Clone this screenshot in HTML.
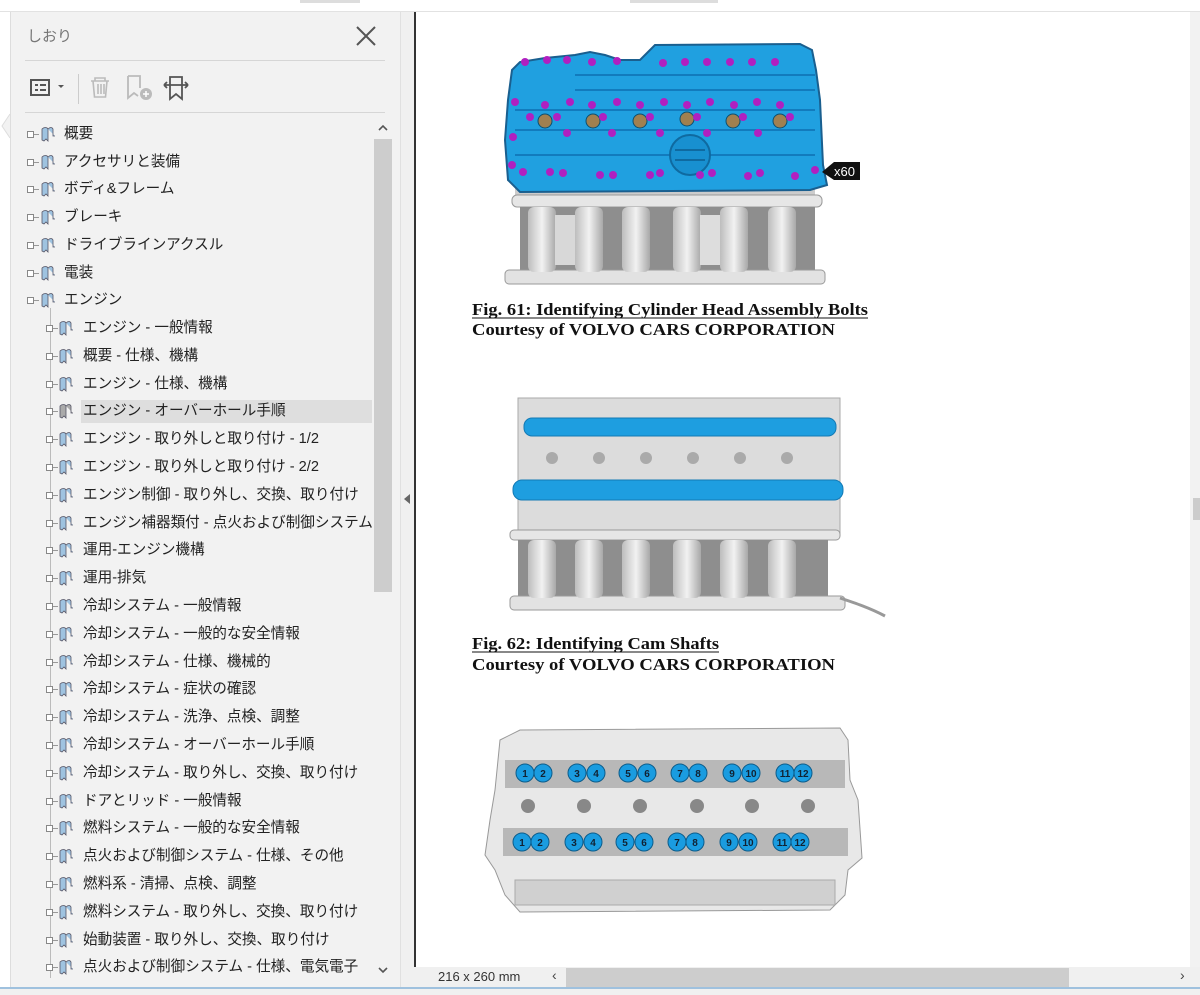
<!DOCTYPE html>
<html><head><meta charset="utf-8">
<style>
*{margin:0;padding:0;box-sizing:border-box}
body{width:1200px;height:995px;overflow:hidden;background:#fff;font-family:"Liberation Sans","Noto Sans CJK JP",sans-serif;position:relative}
.abs{position:absolute}
.side{left:10px;top:12px;width:390px;height:978px;background:#f2f2f2;border-left:1px solid #ddd}
.row{position:absolute;height:24px;line-height:24px;font-size:14.6px;color:#222;white-space:nowrap}
.row .bx{position:absolute;top:9px;width:7px;height:7px;border:1px solid #888;background:#fff}
.row .ln{position:absolute;top:12px;width:5px;height:1px;background:#999}
.row .ic{position:absolute;top:4px;width:16px;height:17px}
</style></head><body>
<div class="abs" style="left:0;top:0;width:1200px;height:12px;background:#fff;border-bottom:1px solid #e2e2e2"></div>
<div class="abs" style="left:300px;top:0;width:60px;height:3px;background:#ddd"></div>
<div class="abs" style="left:630px;top:0;width:88px;height:3px;background:#ddd"></div>
<div class="abs side"></div>
<div class="abs" style="left:27px;top:25px;font-size:15px;color:#777">しおり</div>
<svg class="abs" style="left:355px;top:25px" width="22" height="22"><path d="M2 2L20 20M20 2L2 20" stroke="#555" stroke-width="2"/></svg>
<div class="abs" style="left:25px;top:60px;width:360px;height:1px;background:#d6d6d6"></div>
<svg class="abs" style="left:28px;top:72px" width="170" height="32">
<rect x="3" y="8" width="18" height="15" fill="none" stroke="#555" stroke-width="2"/>
<rect x="7" y="12" width="3" height="2" fill="#555"/><rect x="7" y="17" width="3" height="2" fill="#555"/>
<rect x="12" y="12" width="6" height="2" fill="#555"/><rect x="12" y="17" width="6" height="2" fill="#555"/>
<path d="M30 13l3 3 3-3z" fill="#555"/>
<rect x="50" y="2" width="1" height="30" fill="#ccc"/>
<path d="M63 9h18M67 9v-3h10v3M65 9l1.5 16h11l1.5-16M70 12v10M73 12v10M76 12v10" fill="none" stroke="#bbb" stroke-width="1.6"/>
<path d="M100 4v22l6-5 4 3M100 4h12v12" fill="none" stroke="#bbb" stroke-width="1.8"/>
<circle cx="118" cy="22" r="6" fill="#bbb"/><path d="M115 22h6M118 19v6" stroke="#fff" stroke-width="1.5"/>
<path d="M142 5h12v22l-6-5-6 5z M136 13h24 M136 13l3-3M136 13l3 3M160 13l-3-3M160 13l-3 3" fill="none" stroke="#555" stroke-width="1.8"/>
</svg>
<div class="abs" style="left:25px;top:112px;width:360px;height:1px;background:#d6d6d6"></div>
<svg class="abs" style="left:0;top:112px" width="14" height="30"><path d="M10 2L2 14l8 12" fill="#f2f2f2" stroke="#ddd"/></svg>
<div class="abs" style="left:374px;top:139px;width:18px;height:453px;background:#cdcdcd"></div>
<svg class="abs" style="left:376px;top:122px" width="14" height="12"><path d="M3 8l4-4 4 4" fill="none" stroke="#555" stroke-width="1.6"/></svg>
<svg class="abs" style="left:376px;top:964px" width="14" height="12"><path d="M3 4l4 4 4-4" fill="none" stroke="#555" stroke-width="1.6"/></svg>
<div class="abs" style="left:400px;top:12px;width:15px;height:978px;background:#f0f0f0;border-left:1px solid #e0e0e0"></div>
<svg class="abs" style="left:402px;top:492px" width="10" height="14"><path d="M8 2L2 7l6 5z" fill="#666"/></svg>
<div class="abs" style="left:414px;top:12px;width:2px;height:955px;background:#333"></div>
<div class="abs" style="left:1190px;top:12px;width:10px;height:955px;background:#f2f2f2"></div>
<div class="abs" style="left:1193px;top:498px;width:7px;height:22px;background:#ccc"></div>
<div class="abs" style="left:415px;top:967px;width:785px;height:22px;background:#f0f0f0"></div>
<div class="abs" style="left:438px;top:969px;font-size:13px;color:#333">216 x 260 mm</div>
<div class="abs" style="left:552px;top:967px;font-size:14px;color:#444">&lsaquo;</div>
<div class="abs" style="left:566px;top:968px;width:503px;height:19px;background:#cdcdcd"></div>
<div class="abs" style="left:1180px;top:967px;font-size:14px;color:#444">&rsaquo;</div>
<div class="abs" style="left:0;top:987px;width:1200px;height:2px;background:#9fc1de"></div>
<div class="abs" style="left:0;top:989px;width:1200px;height:6px;background:#f0f0f0"></div>

<div id="tree"></div>
<script>
var roots=["概要","アクセサリと装備","ボディ&フレーム","ブレーキ","ドライブラインアクスル","電装","エンジン"];
var kids=["エンジン - 一般情報","概要 - 仕様、機構","エンジン - 仕様、機構","エンジン - オーバーホール手順","エンジン - 取り外しと取り付け - 1/2","エンジン - 取り外しと取り付け - 2/2","エンジン制御 - 取り外し、交換、取り付け","エンジン補器類付 - 点火および制御システム","運用-エンジン機構","運用-排気","冷却システム - 一般情報","冷却システム - 一般的な安全情報","冷却システム - 仕様、機械的","冷却システム - 症状の確認","冷却システム - 洗浄、点検、調整","冷却システム - オーバーホール手順","冷却システム - 取り外し、交換、取り付け","ドアとリッド - 一般情報","燃料システム - 一般的な安全情報","点火および制御システム - 仕様、その他","燃料系 - 清掃、点検、調整","燃料システム - 取り外し、交換、取り付け","始動装置 - 取り外し、交換、取り付け","点火および制御システム - 仕様、電気電子"];
function icon(c){return '<svg class="ic" viewBox="0 0 16 17"><path d="M2 3c2-2 5-2 6 0v12l-2-2-2 2-2-1z" fill="'+c+'" stroke="#556" stroke-width=".8"/><path d="M8 3c2-2 4-2 5 0v7h2" fill="'+c+'" stroke="#556" stroke-width=".8"/></svg>';}
var h='';
roots.forEach(function(t,i){var y=122+i*27.7;
h+='<div class="row" style="left:0;top:'+y+'px;width:372px"><span class="bx" style="left:27px"></span><span class="ln" style="left:34px"></span><span style="position:absolute;left:40px">'+icon('#9fc3e0')+'</span><span style="position:absolute;left:64px">'+t+'</span></div>';});
h+='<div class="abs" style="left:50px;top:308px;width:1px;height:670px;background:#bbb"></div>';
kids.forEach(function(t,i){var y=316+i*27.8;var sel=(i==3);
if(sel)h+='<div class="abs" style="left:81px;top:'+(y+1)+'px;width:291px;height:23px;background:#dedede"></div>';
h+='<div class="row" style="left:0;top:'+y+'px;width:372px"><span class="bx" style="left:46px"></span><span class="ln" style="left:53px"></span><span style="position:absolute;left:58px">'+icon(sel?'#aaa':'#9fc3e0')+'</span><span style="position:absolute;left:83px">'+t+'</span></div>';});
document.getElementById('tree').innerHTML=h;
</script>

<svg class="abs" style="left:0;top:0" width="1200" height="995">
<defs>
<linearGradient id="pipe" x1="0" x2="1"><stop offset="0" stop-color="#bdbdbd"/><stop offset=".5" stop-color="#f2f2f2"/><stop offset="1" stop-color="#a8a8a8"/></linearGradient>
</defs>
<rect x="515" y="180" width="300" height="20" fill="#ccc"/>
<rect x="512" y="195" width="310" height="12" rx="5" fill="#e6e6e6" stroke="#999"/>
<rect x="520" y="207" width="295" height="65" fill="#8e8e8e"/>
<rect x="505" y="270" width="320" height="14" rx="4" fill="#e2e2e2" stroke="#999"/>
<g fill="url(#pipe)">
<rect x="528" y="207" width="28" height="65" rx="6"/><rect x="575" y="207" width="28" height="65" rx="6"/><rect x="622" y="207" width="28" height="65" rx="6"/><rect x="673" y="207" width="28" height="65" rx="6"/><rect x="720" y="207" width="28" height="65" rx="6"/><rect x="768" y="207" width="28" height="65" rx="6"/></g>
<rect x="555" y="215" width="20" height="50" fill="#d8d8d8"/><rect x="700" y="215" width="20" height="50" fill="#ddd"/>
<path d="M512 70L520 62 545 58 575 55 590 52 605 55 620 60 640 60 650 50 655 45 800 44 812 50 816 70 820 100 823 165 827 185 810 190 520 192 508 180 505 140 508 100z" fill="#20a0e0" stroke="#1a5f8f" stroke-width="2"/>
<path d="M575 75h240M575 90h240M515 110h300M515 130h300M515 155h300" stroke="#127bbd" stroke-width="2" fill="none"/>
<circle cx="690" cy="155" r="20" fill="#1890d0" stroke="#0f6aa0" stroke-width="2"/><path d="M675 150h30M675 160h30" stroke="#0f6aa0" stroke-width="2"/>
<g stroke="#0c4f70" fill="#a08050"><circle cx="545" cy="121" r="7"/><circle cx="593" cy="121" r="7"/><circle cx="640" cy="121" r="7"/><circle cx="687" cy="119" r="7"/><circle cx="733" cy="121" r="7"/><circle cx="780" cy="121" r="7"/></g>
<g fill="#b020c0" id="bolts"></g>
<path d="M822 172l12-10h26v18h-26z" fill="#111"/><text x="834" y="176" font-size="13" fill="#fff" font-family="Liberation Sans">x60</text>

<rect x="518" y="398" width="322" height="135" fill="#dcdcdc" stroke="#aaa"/>
<g fill="#aaa" id="holes62"></g>
<rect x="510" y="530" width="330" height="10" rx="4" fill="#e6e6e6" stroke="#999"/>
<rect x="518" y="540" width="310" height="58" fill="#8e8e8e"/>
<rect x="510" y="596" width="335" height="14" rx="4" fill="#e2e2e2" stroke="#999"/>
<g fill="url(#pipe)"><rect x="528" y="540" width="28" height="58" rx="6"/><rect x="575" y="540" width="28" height="58" rx="6"/><rect x="622" y="540" width="28" height="58" rx="6"/><rect x="673" y="540" width="28" height="58" rx="6"/><rect x="720" y="540" width="28" height="58" rx="6"/><rect x="768" y="540" width="28" height="58" rx="6"/></g>
<path d="M840 598c15 5 30 10 45 18" stroke="#999" stroke-width="3" fill="none"/>
<rect x="524" y="418" width="312" height="18" rx="8" fill="#1e9ee0" stroke="#137ab5"/>
<rect x="513" y="480" width="330" height="20" rx="9" fill="#1e9ee0" stroke="#137ab5"/>

<path d="M500 740L520 730 840 728 848 740 850 780 858 800 862 858 848 870 845 895 830 910 520 912 505 895 495 870 485 855 490 820 495 790z" fill="#e8e8e8" stroke="#999"/>
<rect x="505" y="760" width="340" height="28" fill="#b8b8b8"/>
<rect x="503" y="828" width="345" height="28" fill="#b8b8b8"/>
<rect x="515" y="880" width="320" height="25" fill="#d0d0d0" stroke="#aaa"/>
<g fill="#888"><circle cx="528" cy="806" r="7"/><circle cx="584" cy="806" r="7"/><circle cx="640" cy="806" r="7"/><circle cx="697" cy="806" r="7"/><circle cx="752" cy="806" r="7"/><circle cx="808" cy="806" r="7"/></g>
<g id="nums" font-family="Liberation Sans" font-size="10" font-weight="bold" fill="#123" text-anchor="middle"></g>

<g font-family="Liberation Serif" font-weight="bold" font-size="17" fill="#111">
<text x="472" y="315" textLength="396" lengthAdjust="spacingAndGlyphs">Fig. 61: Identifying Cylinder Head Assembly Bolts</text>
<text x="472" y="335" textLength="363" lengthAdjust="spacingAndGlyphs">Courtesy of VOLVO CARS CORPORATION</text>
<text x="472" y="649" textLength="247" lengthAdjust="spacingAndGlyphs">Fig. 62: Identifying Cam Shafts</text>
<text x="472" y="670" textLength="363" lengthAdjust="spacingAndGlyphs">Courtesy of VOLVO CARS CORPORATION</text>
</g>
<line x1="472" y1="318" x2="868" y2="318" stroke="#111"/>
<line x1="472" y1="652" x2="719" y2="652" stroke="#111"/>
</svg>
<script>
var ns="http://www.w3.org/2000/svg";
function c(g,x,y,r,f,s){var e=document.createElementNS(ns,'circle');e.setAttribute('cx',x);e.setAttribute('cy',y);e.setAttribute('r',r);if(f)e.setAttribute('fill',f);if(s){e.setAttribute('stroke',s);}g.appendChild(e);}
var b=document.getElementById('bolts');
[[525,62],[547,60],[567,60],[592,62],[617,61],[663,63],[685,62],[707,62],[730,62],[752,62],[775,62],[515,102],[545,105],[570,102],[592,105],[617,102],[640,105],[664,102],[687,105],[710,102],[734,105],[757,102],[780,105],[530,117],[557,117],[603,117],[650,117],[697,117],[743,117],[790,117],[513,137],[567,133],[612,133],[660,133],[707,133],[758,133],[512,165],[523,172],[550,172],[563,173],[600,175],[613,175],[650,175],[660,173],[700,175],[712,173],[748,176],[760,173],[795,176],[815,170]].forEach(function(p){c(b,p[0],p[1],4);});
var h=document.getElementById('holes62');
for(var i=0;i<6;i++){c(h,552+i*47,458,6);}
var n=document.getElementById('nums');
var xs=[525,543,577,596,628,647,680,698,732,751,785,803];
[773,842].forEach(function(y,r){xs.forEach(function(x,i){var xx=x-(r?3:0);c(n,xx,y,9,'#1a9ce0','#0d5c8a');var t=document.createElementNS(ns,'text');t.setAttribute('x',xx);t.setAttribute('y',y+4);t.textContent=i+1;n.appendChild(t);});});
</script>
</body></html>
